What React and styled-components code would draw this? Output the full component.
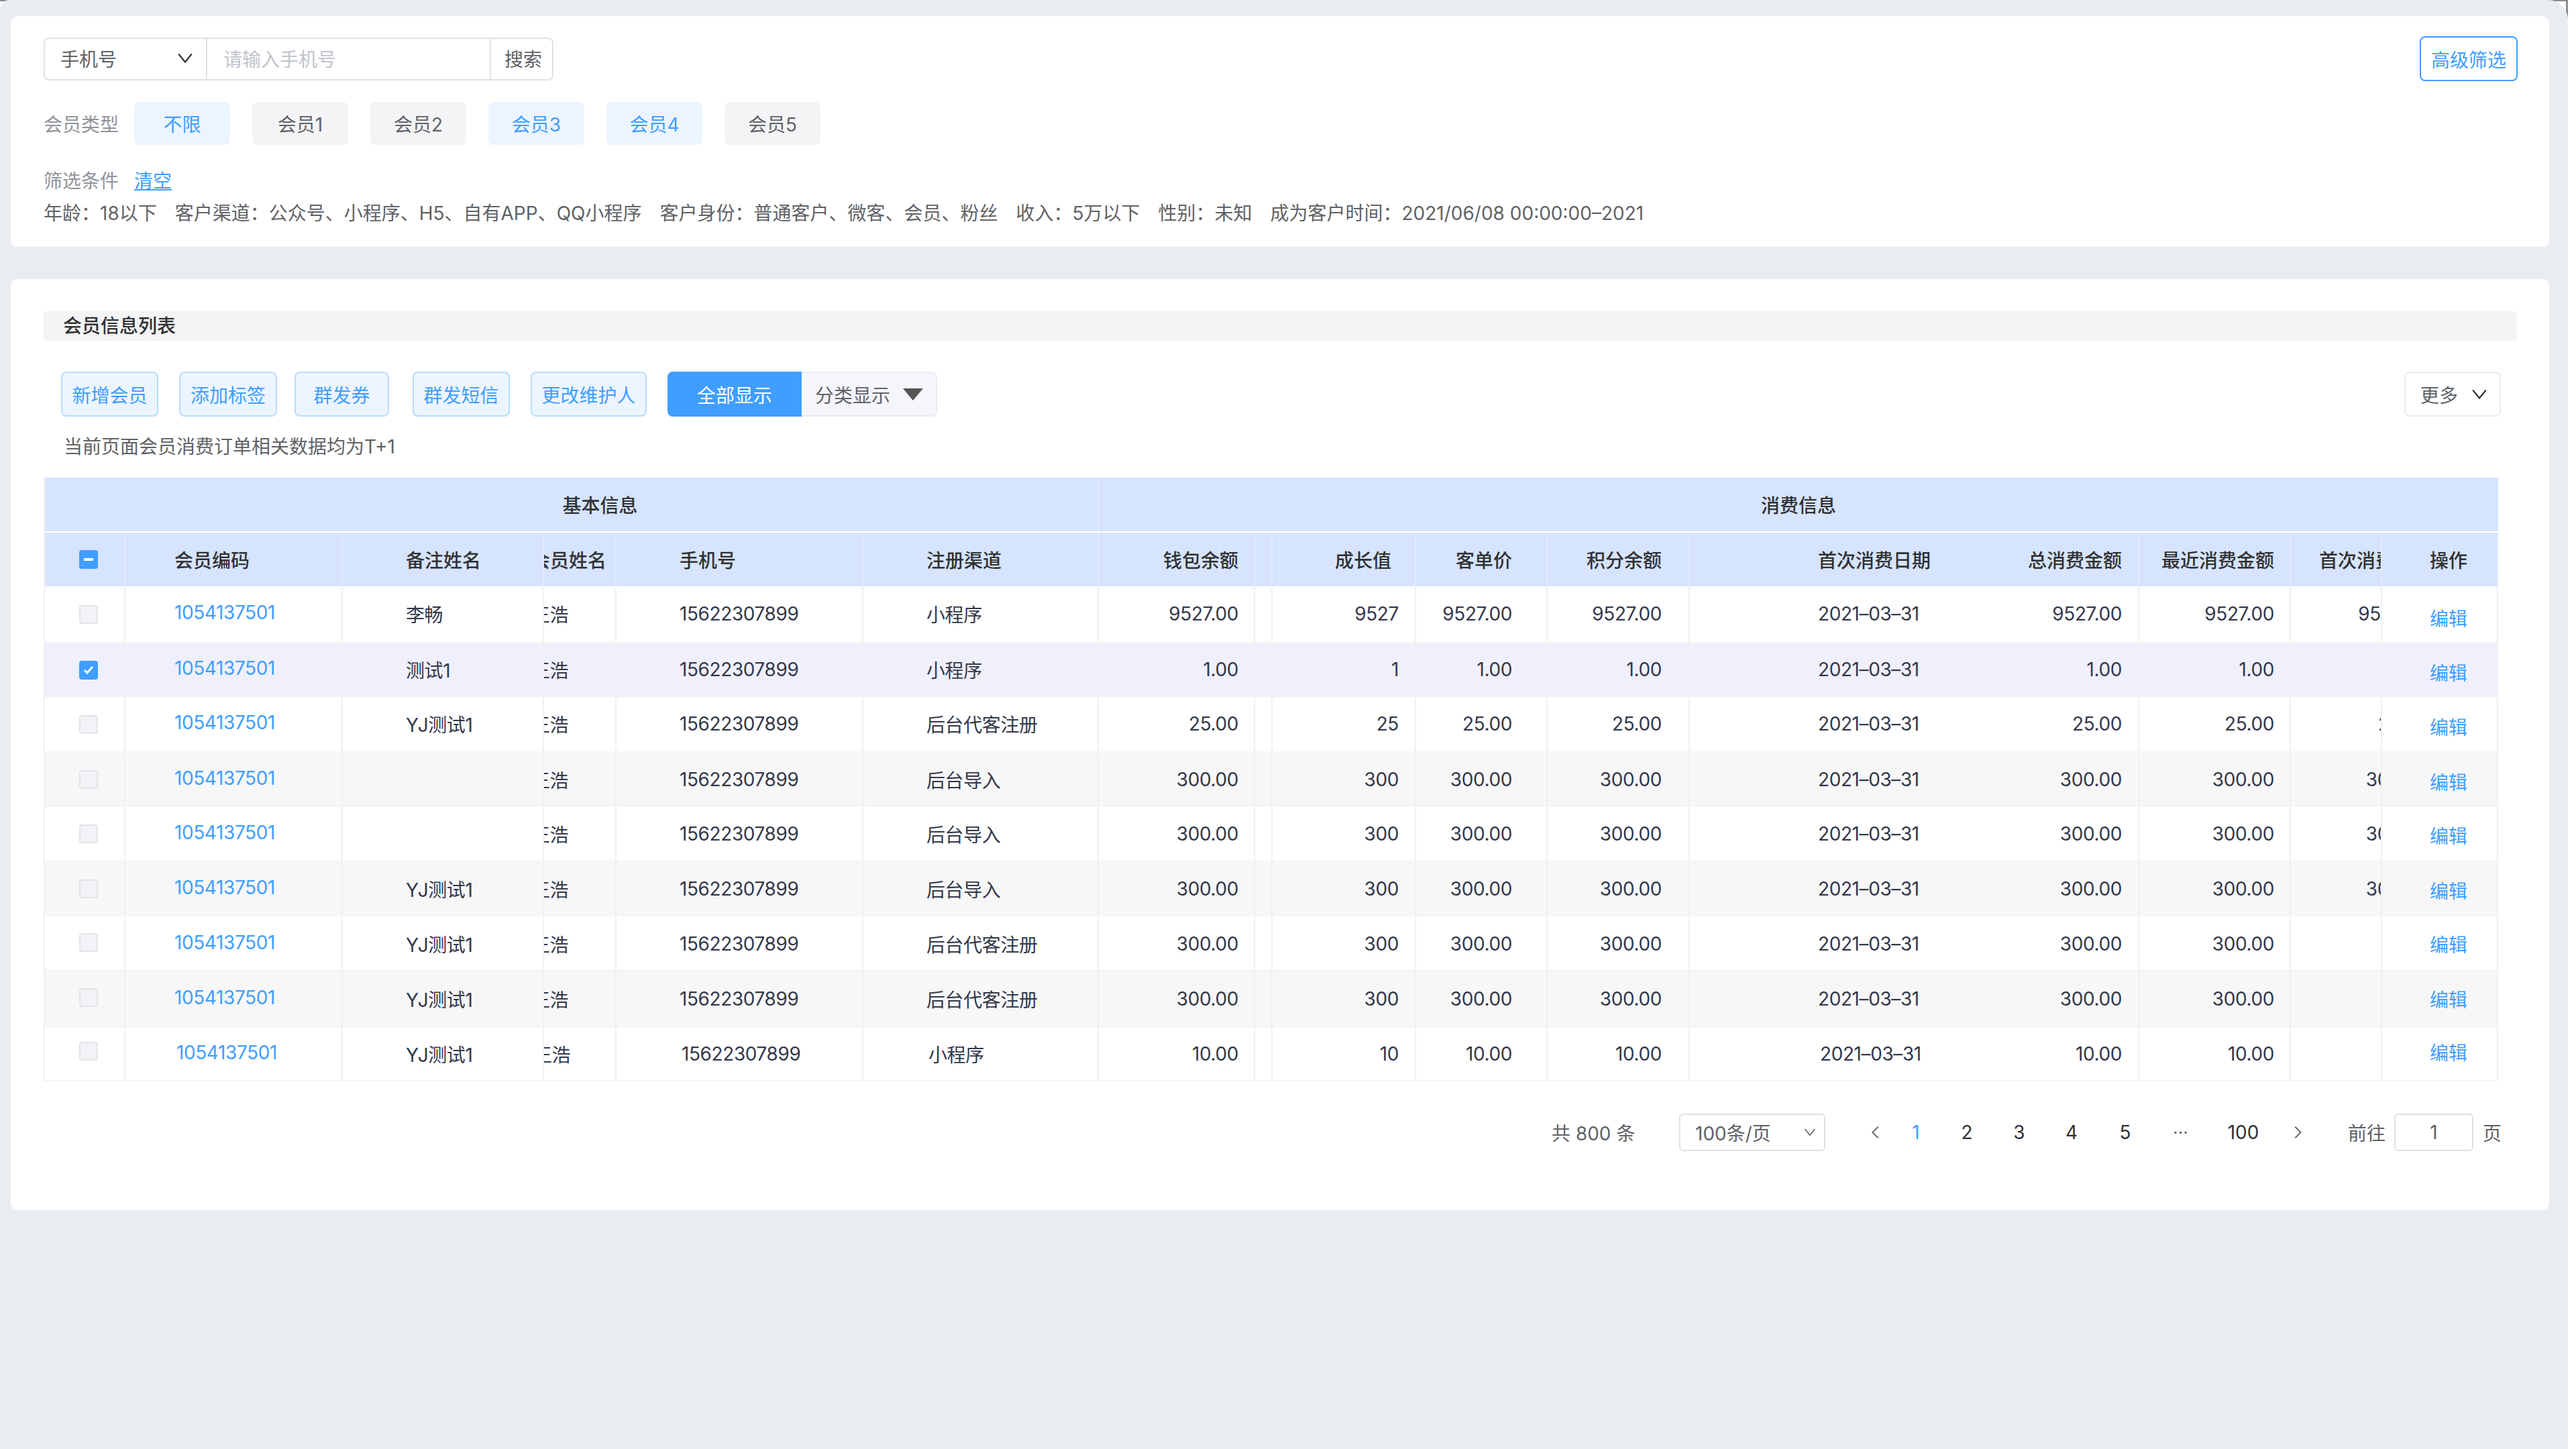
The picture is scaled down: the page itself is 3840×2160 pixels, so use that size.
import React from "react";
import styled, { createGlobalStyle } from "styled-components";

const FONT = `Inter, "Noto Sans CJK SC", sans-serif`;
const BLUE = "#409eff";

const GlobalStyle = createGlobalStyle`
  html, body { margin: 0; padding: 0; background: #fff; }
  body { font-family: ${FONT}; font-size: 28px; color: #606266; }
  * { box-sizing: border-box; }
`;

const Shell = styled.div`
  position: relative;
  width: 3828px;
  height: 2160px;
  background: #fff;

  &::before {
    content: "";
    position: absolute;
    top: 0;
    right: 0;
    width: 26px;
    height: 24px;
    border-top: 2px solid #8d8d8d;
    border-right: 3px solid #8d8d8d;
  }

  &::after {
    content: "";
    position: absolute;
    top: 0;
    left: 0;
    width: 18px;
    height: 10px;
    border-top: 2px solid #8d8d8d;
  }
`;

const Page = styled.div`
  position: relative;
  z-index: 1;
  height: 2160px;
  background: #e9edf1;
  padding: 24px 28px 0 16px;
  border-top-left-radius: 14px;
  border-top-right-radius: 30px;
`;

const Card = styled.section`
  background: #fff;
  border-radius: 10px;
  padding: ${(p) => p.$pad};
  height: ${(p) => p.$height}px;
  margin-bottom: 48px;
`;

const Row = styled.div`
  display: flex;
  align-items: center;
  justify-content: ${(p) => p.$between ? "space-between" : "flex-start"};
  gap: ${(p) => p.$gap || 0}px;
  margin-top: ${(p) => p.$top || 0}px;
`;

const SearchGroup = styled.div`
  display: flex;
  width: 760px;
  height: 64px;
  border: 2px solid #dfe2e8;
  border-radius: 8px;
  align-items: stretch;
`;

const SearchPart = styled.div`
  width: ${(p) => p.$width}px;
  display: flex;
  align-items: center;
  justify-content: space-between;
  white-space: nowrap;
  padding-left: ${(p) => p.$left}px;
  padding-right: ${(p) => p.$right || 0}px;
  padding-bottom: 2px;
  border-right: ${(p) => p.$last ? "0" : "2px solid #dfe2e8"};
  color: ${(p) => p.$color || "#606266"};
`;

const FilterButton = styled.button`
  width: 146px;
  height: 67px;
  font: inherit;
  color: ${BLUE};
  background: #fff;
  border: 2px solid ${BLUE};
  border-radius: 8px;
  padding: 0;
  margin-right: 28px;
`;

const Label = styled.span`
  color: #909399;
  width: 135px;
  flex: none;
`;

const Chips = styled.div`
  display: flex;
  gap: 33px;
`;

const Chip = styled.span`
  width: 143px;
  height: 64px;
  border-radius: 8px;
  display: flex;
  align-items: center;
  justify-content: center;
  background: ${(p) => p.$active ? "#ecf5ff" : "#f4f4f6"};
  color: ${(p) => p.$active ? BLUE : "#606266"};
`;

const ClearLink = styled.a`
  color: ${BLUE};
  text-decoration: underline;
`;

const Details = styled.div`
  display: flex;
  gap: 27px;
  margin-top: 8px;
  color: #606266;
  white-space: nowrap;
`;

const SectionTitle = styled.h2`
  margin: 0 0 46px;
  height: 44px;
  line-height: 44px;
  padding-left: 29px;
  background: #f4f4f5;
  font-size: 28px;
  font-weight: 500;
  color: #303133;
`;

const Toolbar = styled.div`
  display: flex;
  align-items: center;
  padding: 0 24px 0 26px;
`;

const ActionButton = styled.button`
  width: ${(p) => p.$width}px;
  height: 67px;
  margin-right: ${(p) => p.$gap ?? 31}px;
  padding: 0;
  font: inherit;
  color: ${BLUE};
  background: #ecf5ff;
  border: 2px solid #b9dbff;
  border-radius: 8px;
`;

const Segment = styled.div`
  display: flex;
  height: 67px;
  width: 402px;
`;

const SegmentOn = styled.div`
  width: 200px;
  background: ${BLUE};
  color: #fff;
  display: flex;
  align-items: center;
  justify-content: center;
  border-radius: 8px 0 0 8px;
`;

const SegmentOff = styled.div`
  flex: 1;
  background: #f4f6fb;
  border: 2px solid #e9ebf0;
  border-left: 0;
  border-radius: 0 8px 8px 0;
  display: flex;
  align-items: center;
  justify-content: space-between;
  padding: 0 19px 0 20px;
`;

const MoreButton = styled.button`
  width: 144px;
  height: 67px;
  margin-left: auto;
  display: flex;
  align-items: center;
  justify-content: space-between;
  padding: 0 17px 0 22px;
  font: inherit;
  color: #606266;
  background: #fff;
  border: 2px solid #e9ebf0;
  border-radius: 8px;
`;

const Note = styled.p`
  margin: 25px 0 26px 30px;
  height: 40px;
  line-height: 40px;
  color: #606266;
`;

const Table = styled.div`
  width: 3659px;
  font-size: 28px;
  color: #33384a;
  border-left: 2px solid #f0f1f3;
`;

const GroupRow = styled.div`
  display: flex;
  height: 80px;
  margin-bottom: 2px;
  background: #d6e4fd;
`;

const GroupCell = styled.div`
  width: ${(p) => p.$width}px;
  flex: ${(p) => p.$grow ? 1 : "none"};
  display: flex;
  align-items: center;
  justify-content: center;
  padding-left: ${(p) => p.$left || 0}px;
  font-weight: 500;
  color: #303133;
  border-right: ${(p) => p.$line ? "2px solid #e3ecfc" : "0"};
`;

const COLUMNS = [
  { width: 120, left: 51 },
  { width: 324, left: 73 },
  { width: 300, left: 94 },
  { width: 108, left: 0, clip: -19 },
  { width: 368, left: 94 },
  { width: 351, left: 94 },
  { width: 233, right: 23 },
  { width: 26 },
  { width: 214, right: 24, headRight: 35 },
  { width: 196, right: 51 },
  { width: 212, right: 40 },
  { width: 451, left: 191, noLine: true },
  { width: 219, right: 24 },
  { width: 226, right: 23 },
  { width: 136, left: 42, overflowRight: -70 },
  { width: 173, left: 71 },
];

const TableRow = styled.div`
  display: flex;
  height: ${(p) => p.$height}px;
  background: ${(p) => p.$bg};
  border-bottom: ${(p) => p.$head ? "0" : "2px solid #f4f5f6"};
`;

const Cell = styled.div`
  flex: none;
  width: ${(p) => p.$col.width}px;
  display: flex;
  align-items: center;
  overflow: hidden;
  white-space: nowrap;
  justify-content: ${(p) => p.$col.right !== undefined || (p.$col.overflowRight !== undefined && !p.$head) ? "flex-end" : "flex-start"};
  padding-left: ${(p) => p.$col.overflowRight !== undefined && !p.$head ? 0 : p.$col.left || 0}px;
  padding-right: ${(p) => (p.$head && p.$col.headRight) || p.$col.right || 0}px;
  border-right: ${(p) => p.$col.noLine ? "0" : `2px solid ${p.$head ? "#e3ecfc" : "#eff0f3"}`};
  font-weight: ${(p) => p.$head ? 500 : 400};
  letter-spacing: ${(p) => p.$head ? 0 : "-0.4px"};
  color: ${(p) => p.$head ? "#303133" : "inherit"};
`;

const CellText = styled.span`
  flex: none;
  margin-left: ${(p) => p.$clip || 0}px;
  margin-right: ${(p) => p.$overflowRight || 0}px;
  margin-top: ${(p) => (p.$dy || 0) * 2}px;
  transform: translateX(${(p) => p.$nudge || 0}px);
`;

const IdLink = styled.a`
  color: ${BLUE};
  margin-left: ${(p) => p.$shift || 0}px;
  margin-bottom: ${(p) => 4 - (p.$dy || 0) * 2}px;
`;

const EditLink = styled.a`
  color: ${BLUE};
  letter-spacing: 0;
  margin-top: ${(p) => p.$dy * 2}px;
`;

const Check = styled.span`
  width: 28px;
  height: 28px;
  border-radius: 4px;
  display: flex;
  align-items: center;
  justify-content: center;
  margin-top: ${(p) => (p.$dy || 0) * 2}px;
  background: ${(p) => p.$on ? BLUE : "#f2f3f6"};
  border: 2px solid ${(p) => p.$on ? BLUE : "#e3e4e8"};
`;

const Pager = styled.div`
  display: flex;
  align-items: center;
  height: 56px;
  margin-top: 48px;
  padding-left: 2248px;
  color: #606266;
`;

const PagerTotal = styled.span`
  width: 190px;
  flex: none;
`;

const PageSize = styled.div`
  width: 218px;
  height: 56px;
  flex: none;
  display: flex;
  align-items: center;
  justify-content: space-between;
  padding: 0 11px 0 22px;
  border: 2px solid #dfe2e8;
  border-radius: 6px;
  margin-right: 60px;
`;

const PageItem = styled.span`
  width: ${(p) => p.$width}px;
  flex: none;
  color: ${(p) => p.$on ? BLUE : "#303133"};
  display: flex;
  justify-content: center;
`;

const PageDots = styled(PageItem)`
  font-size: 20px;
  letter-spacing: 1px;
  font-weight: 700;
  color: #606266;
`;

const JumpInput = styled.div`
  width: 118px;
  height: 56px;
  flex: none;
  margin: 0 14px 0 13px;
  display: flex;
  align-items: center;
  justify-content: center;
  border: 2px solid #dfe2e8;
  border-radius: 6px;
`;

const JumpLabel = styled.span`
  flex: none;
  margin-left: ${(p) => p.$left || 0}px;
`;

const Chevron = ({ size = 26, dir = "down", color = "#303133", width = 2 }) => {
  const paths = {
    down: "M3 6l9 11 9-11",
    left: "M16 3L7 12l9 9",
    right: "M8 3l9 9-9 9",
  };
  return (
    <svg width={size} height={size} viewBox="0 0 24 24" fill="none" stroke={color} strokeWidth={width}>
      <path d={paths[dir]} />
    </svg>
  );
};

const Triangle = () => (
  <svg width="30" height="18" viewBox="0 0 30 18">
    <path d="M0 0h30L15 18z" fill="#555" />
  </svg>
);

const HEADERS = ["", "会员编码", "备注姓名", "会员姓名", "手机号", "注册渠道", "钱包余额", "", "成长值", "客单价", "积分余额", "首次消费日期", "总消费金额", "最近消费金额", "首次消费金额", "操作"];

const ROWS = [
  { height: 85, remark: "李畅", channel: "小程序", money: "9527.00", grow: "9527", first: "9527.00", dy: -1, edit: 5 },
  { height: 81, remark: "测试1", channel: "小程序", money: "1.00", grow: "1", first: "1.00", dy: -1, edit: 3, checked: true, bg: "#f0f0fd" },
  { height: 82, remark: "YJ测试1", channel: "后台代客注册", money: "25.00", grow: "25", first: "25.00", dy: -1, edit: 3 },
  { height: 81, remark: "", channel: "后台导入", money: "300.00", grow: "300", first: "300.00", dy: 0, edit: 3, bg: "#f7f7f8" },
  { height: 82, remark: "", channel: "后台导入", money: "300.00", grow: "300", first: "300.00", dy: 0, edit: 2 },
  { height: 81, remark: "YJ测试1", channel: "后台导入", money: "300.00", grow: "300", first: "300.00", dy: 0, edit: 2, bg: "#f7f7f8" },
  { height: 81, remark: "YJ测试1", channel: "后台代客注册", money: "300.00", grow: "300", first: "", dy: 1, edit: 1, check: -1 },
  { height: 85, remark: "YJ测试1", channel: "后台代客注册", money: "300.00", grow: "300", first: "", dy: 0, edit: 0, check: -2, bg: "#f7f7f8" },
  { height: 80, remark: "YJ测试1", channel: "小程序", money: "10.00", grow: "10", first: "", dy: 0, edit: -3, check: -4, shift: 3 },
];

const CHIPS = [
  ["不限", true],
  ["会员1", false],
  ["会员2", false],
  ["会员3", true],
  ["会员4", true],
  ["会员5", false],
];

const ACTIONS = [
  ["新增会员", 145, 31],
  ["添加标签", 146, 26],
  ["群发券", 141, 35],
  ["群发短信", 145, 31],
  ["更改维护人", 173, 31],
];

const DETAILS = [
  "年龄：18以下",
  "客户渠道：公众号、小程序、H5、自有APP、QQ小程序",
  "客户身份：普通客户、微客、会员、粉丝",
  "收入：5万以下",
  "性别：未知",
  "成为客户时间：2021/06/08 00:00:00–2021",
];

const App = () => {
  return (
    <>
      <GlobalStyle />
      <Shell>
        <Page>
          <Card $pad="30px 19px 0 49px" $height={344}>
            <Row $between>
              <SearchGroup>
                <SearchPart $width={242} $left={23} $right={18}>
                  手机号 <Chevron />
                </SearchPart>
                <SearchPart $width={423} $left={24} $color="#c0c4cc">请输入手机号</SearchPart>
                <SearchPart $width={91} $left={20} $last>搜索</SearchPart>
              </SearchGroup>
              <FilterButton>高级筛选</FilterButton>
            </Row>
            <Row $top={31}>
              <Label>会员类型</Label>
              <Chips>
                {CHIPS.map(([name, active]) => (
                  <Chip key={name} $active={active}>{name}</Chip>
                ))}
              </Chips>
            </Row>
            <Row $top={32}>
              <Label>筛选条件</Label>
              <ClearLink>清空</ClearLink>
            </Row>
            <Details>
              {DETAILS.map((item) => (
                <span key={item}>{item}</span>
              ))}
            </Details>
          </Card>
          <Card $pad="48px 48px 0 49px" $height={1388}>
            <SectionTitle>会员信息列表</SectionTitle>
            <Toolbar>
              {ACTIONS.map(([name, width, gap]) => (
                <ActionButton key={name} $width={width} $gap={gap}>{name}</ActionButton>
              ))}
              <Segment>
                <SegmentOn>全部显示</SegmentOn>
                <SegmentOff>分类显示 <Triangle /></SegmentOff>
              </Segment>
              <MoreButton>更多 <Chevron /></MoreButton>
            </Toolbar>
            <Note>当前页面会员消费订单相关数据均为T+1</Note>
            <Table>
              <GroupRow>
                <GroupCell $width={1571} $left={86} $line>基本信息</GroupCell>
                <GroupCell $grow>消费信息</GroupCell>
              </GroupRow>
              <TableRow $head $height={80} $bg="#d6e4fd">
                {HEADERS.map((title, i) => (
                  <Cell key={i} $col={COLUMNS[i]} $head>
                    {i === 0 ? (
                      <Check $on>
                        <svg width="14" height="4" viewBox="0 0 14 4"><rect width="14" height="4" fill="#fff" /></svg>
                      </Check>
                    ) : (
                      <CellText $clip={COLUMNS[i].clip}>{title}</CellText>
                    )}
                  </Cell>
                ))}
              </TableRow>
              {ROWS.map((row, i) => {
                const date = "2021–03–31";
                const values = ["", "", row.remark, "王浩", "15622307899", row.channel, row.money, "", row.grow, row.money, row.money, date, row.money, row.money, row.first, ""];
                return (
                  <TableRow key={i} $height={row.height} $bg={row.bg || "#fff"}>
                    {values.map((value, c) => (
                      <Cell key={c} $col={COLUMNS[c]}>
                        {c === 0 && (
                          <Check $on={row.checked} $dy={row.check}>
                            {row.checked && (
                              <svg width="16" height="14" viewBox="0 0 16 14" fill="none" stroke="#fff" strokeWidth="3"><path d="M2 7l4 4 8-9" /></svg>
                            )}
                          </Check>
                        )}
                        {c === 1 && <IdLink $shift={row.shift} $dy={row.dy}>1054137501</IdLink>}
                        {c === 15 && <EditLink $dy={row.edit}>编辑</EditLink>}
                        {c > 1 && c < 15 && (
                          <CellText
                            $clip={COLUMNS[c].clip}
                            $overflowRight={COLUMNS[c].overflowRight}
                            $dy={row.dy}
                            $nudge={c !== 2 && COLUMNS[c].right === undefined ? row.shift : 0}
                          >
                            {value}
                          </CellText>
                        )}
                      </Cell>
                    ))}
                  </TableRow>
                );
              })}
            </Table>
            <Pager>
              <PagerTotal>共 800 条</PagerTotal>
              <PageSize>100条/页 <Chevron size={20} color="#606266" /></PageSize>
              <PageItem $width={30}><Chevron size={22} dir="left" color="#606266" /></PageItem>
              <PageItem $width={90} $on>1</PageItem>
              <PageItem $width={62}>2</PageItem>
              <PageItem $width={94}>3</PageItem>
              <PageItem $width={62}>4</PageItem>
              <PageItem $width={98}>5</PageItem>
              <PageDots $width={68}>···</PageDots>
              <PageItem $width={118}>100</PageItem>
              <PageItem $width={44}><Chevron size={22} dir="right" color="#606266" /></PageItem>
              <JumpLabel $left={53}>前往</JumpLabel>
              <JumpInput>1</JumpInput>
              <JumpLabel>页</JumpLabel>
            </Pager>
          </Card>
        </Page>
      </Shell>
    </>
  );
};

export default App;
